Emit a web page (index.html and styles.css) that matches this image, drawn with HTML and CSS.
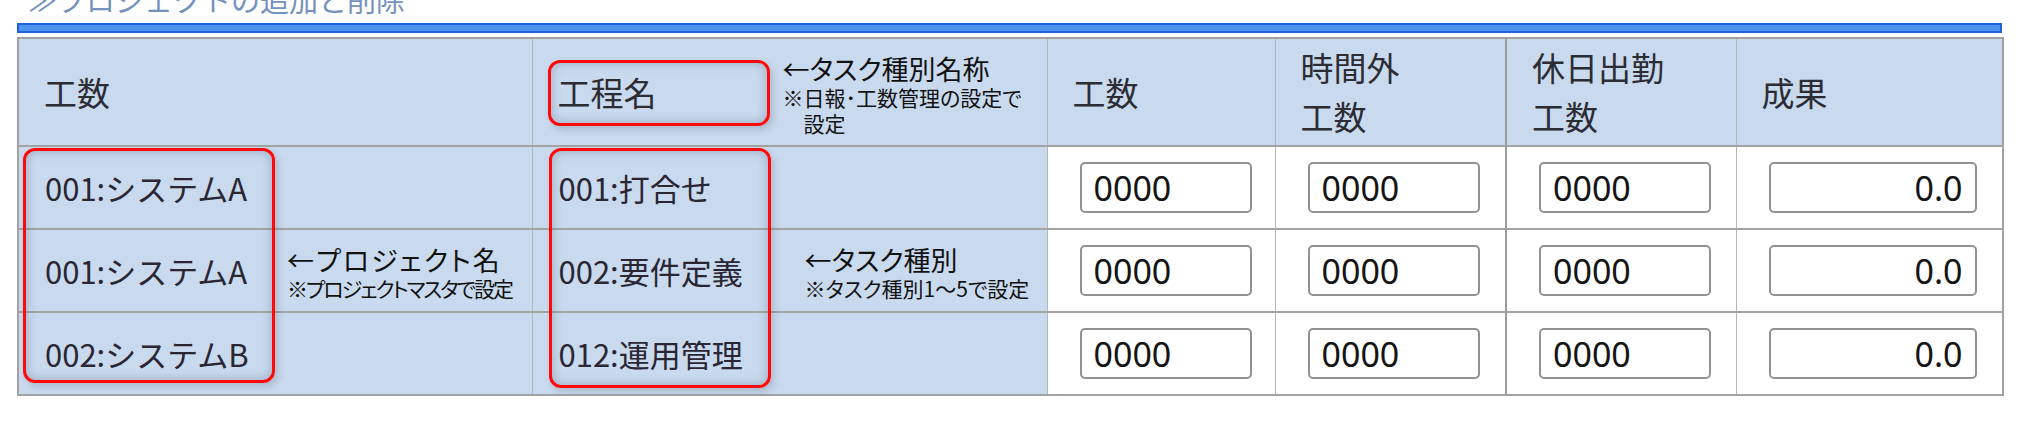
FILE: index.html
```html
<!DOCTYPE html>
<html lang="ja">
<head>
<meta charset="utf-8">
<title>プロジェクトの追加と削除</title>
<link rel="stylesheet" href="styles.css">
</head>
<body>
<div class="page">
  <h2 class="title">≫プロジェクトの追加と削除</h2>
  <div class="bluebar"></div>
  <div class="sheet">
    <table class="work">
      <colgroup>
        <col class="w-proj"><col class="w-task"><col class="w-kos"><col class="w-ot"><col class="w-hol"><col class="w-res">
      </colgroup>
      <thead>
        <tr>
          <th>工数</th>
          <th>
            <div class="with-note">
              <span class="lbl lbl-head">工程名</span>
              <div class="note">
                <div class="note-title">←タスク種別名称</div>
                <div class="note-sub">※日報･工数管理の設定で</div>
                <div class="note-sub indent">設定</div>
              </div>
            </div>
          </th>
          <th>工数</th>
          <th>時間外<br>工数</th>
          <th class="thick">休日出勤<br>工数</th>
          <th>成果</th>
        </tr>
      </thead>
      <tbody>
        <tr>
          <td class="name">001:システムA</td>
          <td class="name">001:打合せ</td>
          <td class="in"><input class="num" type="text" value="0000"></td>
          <td class="in"><input class="num" type="text" value="0000"></td>
          <td class="in thick"><input class="num" type="text" value="0000"></td>
          <td class="in"><input class="num wide" type="text" value="0.0"></td>
        </tr>
        <tr>
          <td class="name">
            <div class="with-note">
              <span class="lbl lbl-proj">001:システムA</span>
              <div class="note">
                <div class="note-title spread">←プロジェクト名</div>
                <div class="note-sub tight">※プロジェクトマスタで設定</div>
              </div>
            </div>
          </td>
          <td class="name">
            <div class="with-note">
              <span class="lbl lbl-task">002:要件定義</span>
              <div class="note">
                <div class="note-title">←タスク種別</div>
                <div class="note-sub">※タスク種別1～5で設定</div>
              </div>
            </div>
          </td>
          <td class="in"><input class="num" type="text" value="0000"></td>
          <td class="in"><input class="num" type="text" value="0000"></td>
          <td class="in thick"><input class="num" type="text" value="0000"></td>
          <td class="in"><input class="num wide" type="text" value="0.0"></td>
        </tr>
        <tr>
          <td class="name">002:システムB</td>
          <td class="name">012:運用管理</td>
          <td class="in"><input class="num" type="text" value="0000"></td>
          <td class="in"><input class="num" type="text" value="0000"></td>
          <td class="in thick"><input class="num" type="text" value="0000"></td>
          <td class="in"><input class="num wide" type="text" value="0.0"></td>
        </tr>
      </tbody>
    </table>
    <div class="mark mark-proj"></div>
    <div class="mark mark-head"></div>
    <div class="mark mark-task"></div>
  </div>
</div>
</body>
</html>
```

FILE: styles.css
```css
* { box-sizing: border-box; }

body {
  margin: 0;
  background: #ffffff;
  font-family: "Noto Sans CJK JP", "Noto Sans", sans-serif;
  color: #262630;
  overflow: hidden;
}

.page {
  padding: 0 0 0 17px;
}

.title {
  margin: -15px 0 0 11px;
  height: 29px;
  font-size: 29px;
  line-height: 29px;
  font-weight: normal;
  color: #7592bc;
  white-space: nowrap;
}

.bluebar {
  margin-top: 9px;
  width: 1985px;
  height: 10px;
  background: #4e93ef;
  border: 2px solid #1f62dc;
}

.sheet {
  position: relative;
  margin-top: 4px;
  width: 1985px;
}

table.work {
  border-collapse: collapse;
  table-layout: fixed;
  width: 1985px;
  border: 2px solid #a2a2a2;
}

.w-proj { width: 514px; }
.w-task { width: 515px; }
.w-kos { width: 228px; }
.w-ot { width: 231px; }
.w-hol { width: 230px; }
.w-res { width: 267px; }

th, td {
  border-left: 1px solid #b6b6b6;
  border-right: 1px solid #b6b6b6;
  padding: 0;
  vertical-align: middle;
  text-align: left;
}

tr { border-bottom: 2px solid #a3a3a3; }

th {
  height: 108px;
  background: #c9daee;
  padding-left: 25px;
  font-size: 33px;
  line-height: 49px;
  font-weight: normal;
  color: #2c2c34;
}

td { height: 83px; }

td.name {
  background: #c9daee;
  padding-left: 26px;
  font-size: 31px;
  color: #2a2634;
  white-space: nowrap;
}

.thick { border-left: 2px solid #9c9c9c; }

td.in {
  background: #ffffff;
  padding-left: 32px;
}

.with-note {
  display: flex;
  align-items: center;
}

.lbl { flex: none; }
.lbl-head { width: 225px; }
.lbl-proj { width: 242px; }
.lbl-task { width: 246px; }

.note {
  color: #111111;
  font-feature-settings: "palt";
  padding-top: 4px;
}

.note-title {
  font-size: 27px;
  line-height: 31px;
}

.note-sub {
  font-size: 21px;
  line-height: 26px;
}

.spread { letter-spacing: 2px; }
.tight { letter-spacing: -2px; }

.indent { padding-left: 21px; }

.num {
  display: block;
  width: 172px;
  height: 51px;
  margin: 0;
  padding: 0 12px;
  border: 2px solid #929292;
  border-radius: 5px;
  background: #ffffff;
  font-family: "Noto Sans", sans-serif;
  font-size: 34px;
  color: #141414;
  outline: none;
}

.num.wide {
  width: 208px;
  text-align: right;
}

.mark {
  position: absolute;
  border: 3px solid #ff0a0a;
  border-radius: 12px;
  box-shadow: inset 0 0 9px 2px rgba(80, 100, 130, 0.3), 3px 4px 7px rgba(0, 0, 0, 0.14);
  pointer-events: none;
}

.mark-proj { left: 6px; top: 111px; width: 252px; height: 235px; }
.mark-head { left: 531px; top: 23px; width: 222px; height: 66px; }
.mark-task { left: 532px; top: 111px; width: 222px; height: 240px; }
```
